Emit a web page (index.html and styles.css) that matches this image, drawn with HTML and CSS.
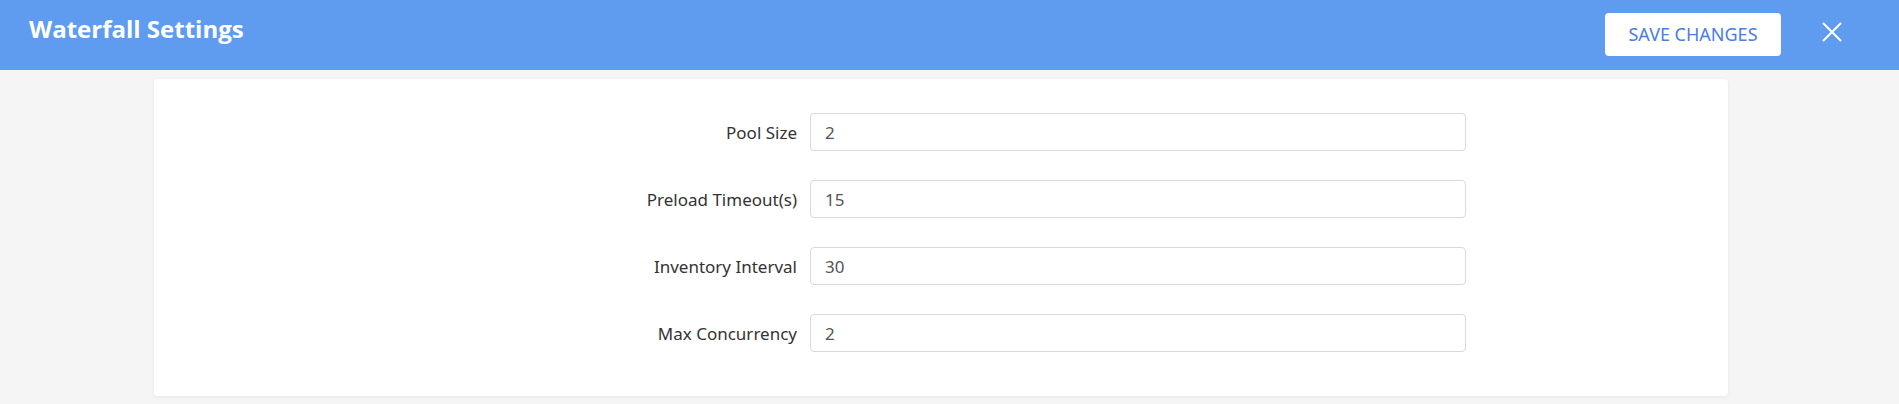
FILE: index.html
```html
<!DOCTYPE html>
<html lang="en">
<head>
<meta charset="utf-8">
<title>Waterfall Settings</title>
<link rel="stylesheet" href="styles.css">
</head>
<body>
<header class="topbar">
  <h1 class="title">Waterfall Settings</h1>
  <div class="actions">
    <button class="save-btn" type="button">SAVE CHANGES</button>
    <button class="close-btn" type="button" aria-label="Close">
      <svg width="20" height="20" viewBox="0 0 20 20"><path d="M1 1 L19 19 M19 1 L1 19" stroke="#fff" stroke-width="2" fill="none"/></svg>
    </button>
  </div>
</header>
<main class="content">
  <section class="card">
    <form class="form">
      <div class="row"><label class="label">Pool Size</label><input class="field" type="text" value="2"></div>
      <div class="row"><label class="label">Preload Timeout(s)</label><input class="field" type="text" value="15"></div>
      <div class="row"><label class="label">Inventory Interval</label><input class="field" type="text" value="30"></div>
      <div class="row"><label class="label">Max Concurrency</label><input class="field" type="text" value="2"></div>
    </form>
  </section>
</main>
</body>
</html>
```
FILE: styles.css
```css
* { box-sizing: border-box; }
html, body { margin: 0; padding: 0; }
body {
  background: #f5f5f5;
  font-family: "Noto Sans", "Open Sans", sans-serif;
  color: #333;
  width: 1899px;
  height: 404px;
  overflow: hidden;
}
.topbar {
  height: 70px;
  background: #5f9cf0;
  display: flex;
  align-items: center;
  justify-content: space-between;
  padding: 0 57px 0 29px;
}
.title {
  margin: 0;
  color: #fff;
  font-family: "Open Sans", sans-serif;
  font-weight: 700;
  font-size: 24px;
  position: relative;
  top: -7px;
}
.actions {
  display: flex;
  align-items: center;
  gap: 41px;
}
.save-btn {
  width: 176px;
  height: 43px;
  background: #fff;
  border: none;
  border-radius: 4px;
  color: #4a7de6;
  font-family: "Noto Sans", sans-serif;
  font-size: 18px;
  padding: 0;
  position: relative;
  top: -1px;
}
.close-btn {
  background: none;
  border: none;
  padding: 0;
  width: 20px;
  height: 20px;
  display: flex;
  position: relative;
  top: -3px;
}
.content {
  padding: 9px 171px 0 154px;
}
.card {
  background: #fff;
  border-radius: 4px;
  box-shadow: 0 1px 4px rgba(0,0,0,0.06);
  height: 317px;
  padding: 34px 0 0 0;
}
.form {
  display: flex;
  flex-direction: column;
  gap: 29px;
}
.row {
  display: flex;
  align-items: center;
  gap: 13px;
}
.label {
  width: 643px;
  text-align: right;
  font-size: 17px;
  color: #333;
}
.field {
  width: 656px;
  height: 38px;
  border: 1px solid #d9d9d9;
  border-radius: 4px;
  padding: 0 14px;
  font-family: "Noto Sans", sans-serif;
  font-size: 17px;
  color: #555;
  background: #fff;
  outline: none;
}
```
